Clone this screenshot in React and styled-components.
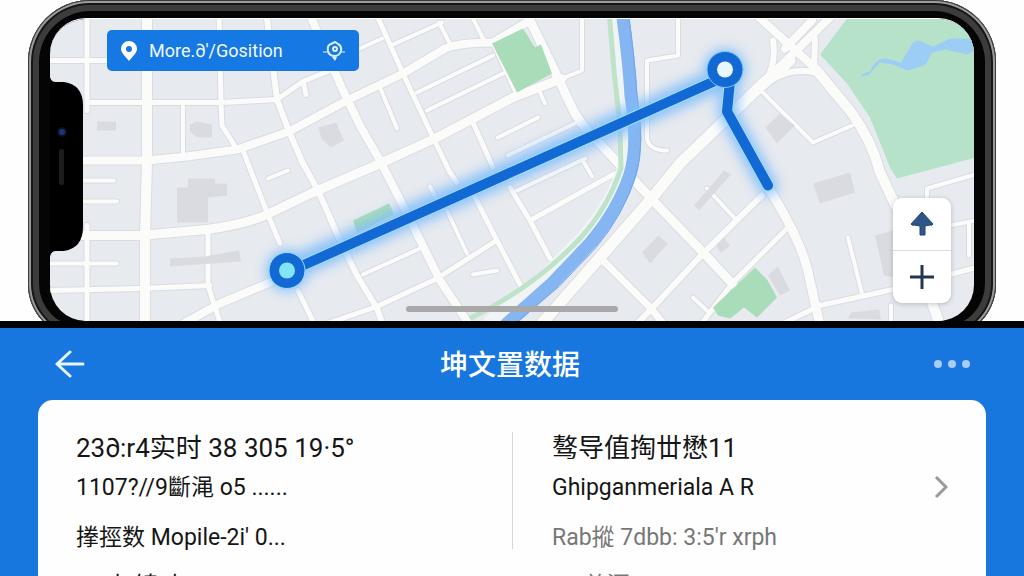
import React from "react";
import styled, { createGlobalStyle } from "styled-components";

const roads = [
  { w: 10, d: "M147 10V160L145 235V330" },
  { w: 5, d: "M87 10V110M87 225V330" },
  { w: 5, d: "M50 60H120M87 102H221L277 99L303 81L330 70M303 81L306 94" },
  { w: 5, d: "M219 10L221 102L222 125L237 149" },
  { w: 6, d: "M266 10L277 99L289 131L303 163L318 190L340 240L357 275L377 308L383 325" },
  { w: 8, d: "M308 10L343 90L360 125L380 160L407 213L440 280L470 325" },
  { w: 4, d: "M183 103V156" },
  { w: 8, d: "M80 160H147L187 156L237 149L289 131L347 100L403 73L445 48Q460 42 493 42L530 20" },
  { w: 9, d: "M80 235H140L207 229Q245 224 267 214L313 192L380 163L437 137L513 97L562 78" },
  { w: 4, d: "M562 78L582 70V10M50 263H117M83 180H114M83 201H117" },
  { w: 5, d: "M50 290L140 288L210 285M208 230V285L221 325" },
  { w: 8, d: "M180 325L220 303L270 282" },
  { w: 5, d: "M243 150L267 212L280 243M298 290L315 325" },
  { w: 5, d: "M330 322L377 306L437 278L495 241" },
  { w: 4, d: "M363 274L420 248M268 178L288 170M380 87L397 128" },
  { w: 5, d: "M377 15L403 73L433 137L450 172L457 182" },
  { w: 5, d: "M473 193L497 240L520 284M473 122L493 167" },
  { w: 4, d: "M447 210L467 253M430 186L436 198M439 22L452 47M393 44L442 22M473 18L484 40" },
  { w: 4, d: "M417 92L493 55M427 110L503 73M493 43L517 95M360 48L382 38" },
  { w: 5, d: "M510 187L530 220L550 258M530 220L615 173" },
  { w: 4, d: "M517 190L585 158M583 160L592 176M498 137L538 117M540 92L545 103M508 155L575 123M473 274L497 270" },
  { w: 9, d: "M525 10L553 67L570 103Q578 122 597 140L653 200L705 254L733 284" },
  { w: 11, d: "M540 325L600 257L650 200L680 163L763 83L790 60" },
  { w: 7, d: "M600 257L650 307L665 325" },
  { w: 6, d: "M635 325L650 310L703 253L762 195" },
  { w: 4, d: "M707 188L735 218M693 297L708 311" },
  { w: 5, d: "M787 228L733 282L700 325" },
  { w: 9, d: "M768 187Q797 232 807 267L820 325" },
  { w: 5, d: "M785 322L820 305L893 289L980 266" },
  { w: 4, d: "M848 237L853 257L862 293M763 92L813 142L852 125M927 200V188L975 174M950 225L975 220M969 222V255M891 305V325" },
  { w: 10, d: "M815 68Q838 96 850 110Q872 140 880 172L905 225L940 325" },
  { w: 8, d: "M757 15L820 72M832 15L763 83M812 20L785 48" },
  { w: 6, d: "M773 40Q777 65 763 85M815 38L814 70M764 86Q785 66 815 72" },
  { w: 4, d: "M678 10V55L647 60V138Q649 150 667 150" },
];

const buildings = [
  "M97 121h19v9h-19z",
  "M190 124l6 -3l16 3v13h-15l-7 -6z",
  "M318 127l18 -5l8 18l-13 7l-9 -8z",
  "M177 187h11v-9h27v5h12v12l-19 2v25h-31z",
  "M170 258l35 -2l34 -6l2 11l-71 5z",
  "M642 252l16 -17l10 8l-18 20z",
  "M765 127l15 -14l15 12l-18 18z",
  "M813 183l37 -11l5 20l-35 11z",
  "M875 235l18 -5v47l-9 -2z",
  "M768 275l10 -9l12 24l-10 5z",
  "M694 205l30 -35l7 4l-32 36z",
  "M716 245l8 -8l6 8l-9 8z",
  "M848 318l3 -6l28 -3l2 10z",
];

const CityMap = () => (
  <MapSvg viewBox="50 18 924 303" preserveAspectRatio="xMidYMid slice" aria-hidden="true">
    <defs>
      <filter id="glow" x="-20%" y="-20%" width="140%" height="140%">
        <feGaussianBlur stdDeviation="6" />
      </filter>
    </defs>
    <rect x="0" y="0" width="1024" height="340" fill="#e7eaef" />
    <path
      fill="#b7e2ca"
      d="M847 18H980V156L897 178L890 167L870 117L847 83L820 54Z"
    />
    <g fill="none" strokeLinejoin="round" strokeLinecap="round">
      {roads.map((r) => (
        <path key={r.d} d={r.d} stroke="#dadce1" strokeWidth={r.w + 2} />
      ))}
      {roads.map((r) => (
        <path key={r.d} d={r.d} stroke="#fbfbfa" strokeWidth={r.w} />
      ))}
    </g>
    <g fill="#dadbe0">
      {buildings.map((d) => (
        <path key={d} d={d} />
      ))}
    </g>
    <g fill="#a9dcb8">
      <path d="M492 43L523 28L535 47L541 44L552 73L517 92Z" />
      <path d="M353 220L389 203L394 214L357 232Z" />
      <path d="M713 307L755 267L767 279L777 297L757 317L744 307L730 318L718 315Z" />
    </g>
    <path
      fill="#9ccdf5"
      d="M861 74L870 71Q876 57 886 58L901 62L913 42Q918 38 923 42L933 46L950 38L974 38V50L967 54L945 49L932 52L926 64L908 70L893 64L880 62L869 74L862 76Z"
    />
    <g fill="none">
      <path
        stroke="#f1f4f6"
        strokeWidth="20"
        d="M618 10L625 87Q634 140 626 172Q612 210 583 242L545 280L490 325"
      />
      <path
        stroke="#bfe3c8"
        strokeWidth="5"
        d="M609 10L614 70L620 125L621 168Q608 207 580 238Q535 286 470 318"
      />
      <path
        stroke="#86b6f2"
        strokeWidth="13"
        d="M622 10Q629 60 631 95Q639 145 630 174Q618 210 590 243L553 282L505 325"
      />
      <path
        stroke="#6fa4ea"
        strokeWidth="1"
        d="M628 10Q635 60 637 95Q645 145 636 174Q624 214 596 247L559 286L513 325"
      />
    </g>
    <g fill="none" strokeLinecap="round" strokeLinejoin="round">
      <g filter="url(#glow)" stroke="#7dbcfb" opacity="0.85">
        <path strokeWidth="24" d="M287 270L725 76" />
        <path strokeWidth="20" d="M730 85L727 111L768 186" />
        <circle cx="287" cy="270" r="19" fill="#7dbcfb" strokeWidth="4" />
        <circle cx="725" cy="69" r="19" fill="#7dbcfb" strokeWidth="4" />
      </g>
      <path stroke="#9bdcff" strokeWidth="12" d="M287 272L725 76M730 80L727 111L768 185" />
      <path stroke="#1269d3" strokeWidth="10" d="M287 272L725 76M730 80L727 111L768 185" />
    </g>
    <circle cx="287" cy="270" r="18" fill="#1269d3" stroke="#9bdcff" />
    <circle cx="287" cy="270" r="8" fill="#84e4f7" />
    <circle cx="725" cy="69" r="18" fill="#1269d3" stroke="#7dc4fb" />
    <circle cx="725" cy="69" r="8" fill="#e8f6fd" />
  </MapSvg>
);

const App = () => {
  return (
    <Page>
      <Global />
      <Stage>
        <Phone>
          <Screen>
            <CityMap />
            <Notch viewBox="0 0 40 180" aria-hidden="true">
              <path d="M0 0Q1 5 6 5H14Q33 8 33 28V150Q33 171 14 174H6Q1 174 0 180Z" />
              <circle cx="12" cy="55" r="5" fill="#0b1024" />
              <circle cx="12" cy="55" r="3" fill="#1c3474" />
              <rect x="9" y="72" width="5" height="36" rx="2" fill="#1d1d20" />
            </Notch>
            <Place>
              <svg width="16" height="20" viewBox="0 0 16 20" aria-hidden="true">
                <path
                  fill="#fff"
                  fillRule="evenodd"
                  d="M8 0A8 8 0 0 0 0 8C0 12 5 16 8 20C11 16 16 12 16 8A8 8 0 0 0 8 0ZM8 5A3 3 0 1 1 8 11A3 3 0 1 1 8 5Z"
                />
              </svg>
              <span>More.∂'/Gosition</span>
              <svg width="22" height="20" viewBox="0 0 22 20" fill="none" stroke="#d9efff" aria-hidden="true">
                <path strokeWidth="2" d="M5 10Q4 4 8 3L12 1L15 3Q19 5 18 10Q16 15 12 15Q6 15 5 10Z" />
                <circle cx="12" cy="8" r="2" strokeWidth="2" />
                <path strokeWidth="1" d="M0 11H6M17 11H22" />
                <path fill="#d9efff" stroke="none" d="M9 16H14L12 20Z" />
              </svg>
            </Place>
            <Controls>
              <button aria-label="North">
                <svg width="24" height="26" viewBox="0 0 24 26">
                  <path
                    fill="#2f5688"
                    stroke="#23456f"
                    d="M12 1L23 13Q22 15 20 14L15 15V24H10V15L4 14Q2 15 1 13Z"
                  />
                </svg>
              </button>
              <button aria-label="Zoom in">
                <svg width="24" height="24" viewBox="0 0 24 24">
                  <path stroke="#24364f" strokeWidth="3" d="M12 0V24M0 12H24" />
                </svg>
              </button>
            </Controls>
            <HomeBar />
          </Screen>
        </Phone>
      </Stage>
      <Panel>
        <Header>
          <button aria-label="返回">
            <svg width="32" height="28" viewBox="0 0 32 28" fill="none">
              <path
                stroke="#e9f5ff"
                strokeWidth="3"
                strokeLinecap="round"
                strokeLinejoin="round"
                d="M16 2L3 14L16 26M4 14H29"
              />
            </svg>
          </button>
          <h1>坤文置数据</h1>
          <button aria-label="更多">
            <svg width="36" height="8" viewBox="0 0 36 8" fill="#a9cbf6">
              <circle cx="4" cy="4" r="4" />
              <circle cx="18" cy="4" r="4" />
              <circle cx="32" cy="4" r="4" />
            </svg>
          </button>
        </Header>
        <Card>
          <Column>
            <Line $big>23∂:r4实时 38 305 19·5°</Line>
            <Line>1107?//9斷渑 o5 ......</Line>
            <Line $gap="10px">搼挳数 Mopile-2i' 0...</Line>
            <Line $gap="8px">.... 小 镇 小</Line>
          </Column>
          <Column $split>
            <Line $big>骜导值掏丗懋11</Line>
            <Line>Ghipganmeriala A R</Line>
            <Line $gap="10px" $muted>Rab摐 7dbb: 3:5'r xrph</Line>
            <Line $gap="8px" $muted>10 总源 5WHP-2</Line>
          </Column>
          <Next aria-label="详情">
            <svg width="14" height="22" viewBox="0 0 14 22" fill="none">
              <path stroke="#9a9a9a" strokeWidth="3" d="M2 1L12 11L2 21" />
            </svg>
          </Next>
        </Card>
      </Panel>
    </Page>
  );
};

export default App;

const Global = createGlobalStyle`
  * {
    box-sizing: border-box;
  }
  body {
    margin: 0;
    font-family: Roboto, "Noto Sans CJK SC", sans-serif;
  }
  button {
    display: flex;
    align-items: center;
    justify-content: center;
    padding: 0;
    border: none;
    background: none;
    font: inherit;
  }
`;
const Page = styled.div`
  height: 100vh;
  display: flex;
  flex-direction: column;
  overflow: hidden;
  background: #fefefe;
`;
const Stage = styled.div`
  flex: none;
  padding: 0 28px;
  overflow: hidden;
  border-bottom: 7px solid #020306;
`;
const Phone = styled.div`
  margin-bottom: -17px;
  padding: 18px 22px 17px;
  border-radius: 62px 62px 54px 54px;
  background: #050505;
  box-shadow: inset 0 0 0 1px #3a3a3a, inset 0 0 0 3px #9c9c9c,
    inset 0 0 0 5px #161616, inset 0 0 0 11px #3c3c3c;
`;
const Screen = styled.div`
  position: relative;
  height: 303px;
  overflow: hidden;
  border-radius: 36px;
  border-top: 1px solid #fff;
`;
const MapSvg = styled.svg`
  display: block;
  width: 100%;
  height: 100%;
`;
const Notch = styled.svg`
  position: absolute;
  left: 0;
  top: 58px;
  width: 40px;
  height: 180px;
`;
const Place = styled.button`
  && {
    position: absolute;
    left: 57px;
    top: 11px;
    width: 252px;
    height: 41px;
    padding: 0 14px;
    gap: 12px;
    border-radius: 5px;
    background: #1678e2;
    color: #f1f9ff;
    font-size: 18px;
  }

  span {
    flex: 1;
    text-align: left;
    white-space: nowrap;
  }
`;
const Controls = styled.div`
  position: absolute;
  right: 23px;
  bottom: 18px;
  width: 58px;
  border-radius: 9px;
  background: #fff;
  box-shadow: 0 1px 5px rgba(60, 70, 90, 0.3);

  button {
    width: 100%;
    height: 52px;
  }
  button + button {
    height: 53px;
    border-top: 1px solid #d9dbe0;
  }
`;
const HomeBar = styled.div`
  position: absolute;
  left: 50%;
  bottom: 9px;
  width: 212px;
  height: 6px;
  margin-left: -106px;
  border-radius: 3px;
  background: #a8a8a8;
`;
const Panel = styled.main`
  flex: 1;
  min-height: 0;
  display: flex;
  flex-direction: column;
  padding: 0 38px;
  background: #1777de;
`;
const Header = styled.header`
  flex: none;
  height: 72px;
  display: flex;
  align-items: center;
  justify-content: space-between;
  padding: 0 16px;

  h1 {
    margin: 0;
    padding-top: 4px;
    color: #fff;
    font-size: 28px;
    font-weight: 500;
    line-height: 40px;
  }
`;
const Card = styled.section`
  position: relative;
  flex: 1;
  display: grid;
  grid-template-columns: 1fr 1fr;
  padding: 28px 38px 0;
  border-radius: 15px 15px 0 0;
  background: #fefefe;
`;
const Column = styled.div`
  position: relative;
  padding-left: ${(p) => (p.$split ? "40px" : "0")};

  &:before {
    content: "";
    display: ${(p) => (p.$split ? "block" : "none")};
    position: absolute;
    left: 0;
    top: 4px;
    width: 1px;
    height: 117px;
    background: #d6d6d6;
  }
`;
const Line = styled.p`
  margin: ${(p) => p.$gap || 0} 0 0;
  height: 40px;
  line-height: 40px;
  font-size: ${(p) => (p.$big ? "26px" : "23px")};
  color: ${(p) => (p.$muted ? "#777" : "#151515")};
  white-space: nowrap;
`;
const Next = styled.button`
  && {
    position: absolute;
    right: 38px;
    top: 76px;
  }
`;
